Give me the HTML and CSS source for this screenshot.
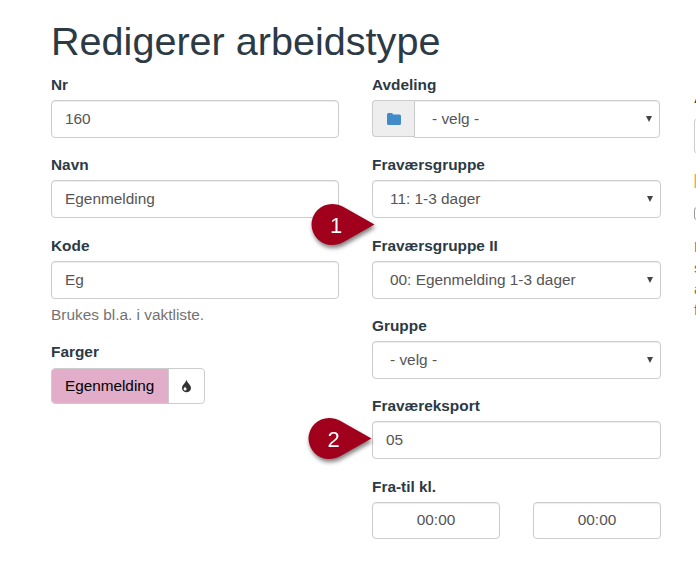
FILE: index.html
```
<!DOCTYPE html>
<html lang="no">
<head>
<meta charset="utf-8">
<title>Redigerer arbeidstype</title>
<link rel="stylesheet" href="styles.css">
</head>
<body>
<main class="page">
  <h1>Redigerer arbeidstype</h1>
  <div class="columns">
    <section>
      <div class="group"><div class="label">Nr</div><div class="control">160</div></div>
      <div class="group"><div class="label">Navn</div><div class="control">Egenmelding</div></div>
      <div class="group last"><div class="label">Kode</div><div class="control">Eg</div></div>
      <p class="help">Brukes bl.a. i vaktliste.</p>
      <div class="label color-label">Farger</div>
      <div class="color-group">
        <span class="swatch">Egenmelding</span>
        <span class="drop"><svg width="11" height="14" viewBox="0 0 11 14"><path fill="#333" d="M5.500 0.500C5.200 3.500 1 5.800 1 9a4.500 4.300 0 0 0 9 0C10 5.800 5.800 3.500 5.500 .5Z"/><path fill="#fff" d="M4 7.600C3.800 8.600 2.600 9 2.600 10.100a1.500 1.500 0 0 0 3 0C5.600 9 4.200 8.600 4 7.600Z"/></svg></span>
      </div>
    </section>
    <section>
      <div class="group"><div class="label">Avdeling</div>
        <div class="input-group">
          <span class="addon"><svg width="14" height="12" viewBox="0 0 14 12"><path fill="#428bca" d="M0 1.500Q0 0 1.500 0H4.500Q6 0 6 1.500H12.500Q14 1.500 14 3V10.500Q14 12 12.500 12H1.500Q0 12 0 10.500Z"/></svg></span>
          <div class="control select">- velg -<i class="arrow"></i></div>
        </div>
      </div>
      <div class="group"><div class="label">Fraværsgruppe</div><div class="control select">11: 1-3 dager<i class="arrow"></i></div></div>
      <div class="group"><div class="label">Fraværsgruppe II</div><div class="control select">00: Egenmelding 1-3 dager<i class="arrow"></i></div></div>
      <div class="group"><div class="label">Gruppe</div><div class="control select">- velg -<i class="arrow"></i></div></div>
      <div class="group"><div class="label">Fraværeksport</div><div class="control">05</div></div>
      <div class="group"><div class="label">Fra-til kl.</div>
        <div class="times"><div class="control time">00:00</div><div class="control time">00:00</div></div>
      </div>
    </section>
    <section class="side">
      <div class="side-label">A</div>
      <div class="side-control"></div>
      <div class="side-heading">F</div>
      <div class="side-check"></div>
      <p class="side-text">B<br>s<br>a<br>f</p>
    </section>
  </div>
  <svg class="marker one" width="80" height="60" viewBox="0 0 80 60"><path class="pin" d="M73.500 30.500 L43 13.200C39 10.900 35 10 31 10A20.500 20.500 0 0 0 31 51C35 51 39 50 43 47.800Z"/><text x="35" y="38.500">1</text></svg>
  <svg class="marker two" width="80" height="60" viewBox="0 0 80 60"><path class="pin" d="M73.500 30.500 L43 13.200C39 10.900 35 10 31 10A20.500 20.500 0 0 0 31 51C35 51 39 50 43 47.800Z"/><text x="35.500" y="38.500">2</text></svg>
</main>
</body>
</html>
```
FILE: styles.css
```
* { box-sizing: border-box; }
body {
  margin: 0;
  background: #fff;
  color: #2c3a45;
  font: 15.4px/22px "Liberation Sans", Arial, sans-serif;
}
.page {
  position: relative;
  width: 696px;
  height: 565px;
  padding: 19px 0 0 51px;
  overflow: hidden;
}
h1 {
  margin: 0 0 11px;
  font-size: 39.6px;
  font-weight: 400;
  line-height: 44px;
}
.columns {
  display: grid;
  grid-template-columns: 288px 289px 200px;
  column-gap: 33px;
}
.group { margin-bottom: 16.340px; }
.group.last { margin-bottom: 0; }
.label {
  height: 22px;
  margin-bottom: 4px;
  font-size: 15.4px;
  font-weight: 700;
}
.label.color-label { margin-bottom: 5px; }
.control {
  display: flex;
  align-items: center;
  height: 38px;
  padding: 0 13px;
  border: 1px solid #ccc;
  border-radius: 4px;
  background: #fff;
  box-shadow: inset 0 1px 1px rgba(0, 0, 0, .075);
  color: #555;
  font-size: 15.4px;
}
.select {
  justify-content: space-between;
  padding: 0 7px 0 17px;
}
.arrow {
  border: solid transparent;
  border-width: 6px 3px 0;
  border-top-color: #444;
}
.help {
  margin: 5px 0 15px;
  color: #737373;
  font-size: 15.4px;
}
.color-group {
  display: flex;
  width: 154px;
  height: 36px;
  border: 1px solid #ccc;
  border-radius: 4px;
  overflow: hidden;
}
.swatch {
  display: flex;
  align-items: center;
  width: 116px;
  padding-left: 13px;
  background: #e1adc9;
  color: #000;
  font-size: 15.3px;
}
.drop {
  display: flex;
  flex: 1;
  align-items: center;
  justify-content: center;
  border-left: 1px solid #ccc;
}
.input-group {
  display: flex;
  width: 288px;
}
.addon {
  display: flex;
  align-items: center;
  justify-content: center;
  width: 42px;
  height: 37px;
  border: 1px solid #ccc;
  border-right: 0;
  border-radius: 4px 0 0 4px;
  background: #eee;
}
.input-group .control {
  flex: 1;
  border-radius: 0 4px 4px 0;
}
.times {
  display: flex;
  gap: 33px;
}
.time {
  flex: 1;
  height: 37px;
  justify-content: center;
}
.side {
  padding-top: 13px;
}
.side-label {
  height: 22px;
  margin-bottom: 9px;
  font-size: 15.4px;
  font-weight: 700;
}
.side-control {
  height: 36px;
  border: 1px solid #ccc;
  border-radius: 4px;
}
.side-heading {
  height: 30px;
  margin: 16px 0 7px -1px;
  color: #dfa868;
  font-size: 21px;
  line-height: 22px;
}
.side-check {
  width: 13px;
  height: 13px;
  border: 1px solid #999;
  border-radius: 3px;
}
.side-text {
  margin: 16px 0 0;
  color: #8a6d3b;
  font-size: 15.4px;
  line-height: 21px;
}
.marker {
  position: absolute;
  filter: drop-shadow(1px 3px 2px rgba(0, 0, 0, .5));
}
.one { left: 301px; top: 194px; }
.two { left: 298px; top: 408px; }
.pin { fill: #a1001c; }
.marker text {
  fill: #fff;
  font-size: 22px;
  text-anchor: middle;
}
```
